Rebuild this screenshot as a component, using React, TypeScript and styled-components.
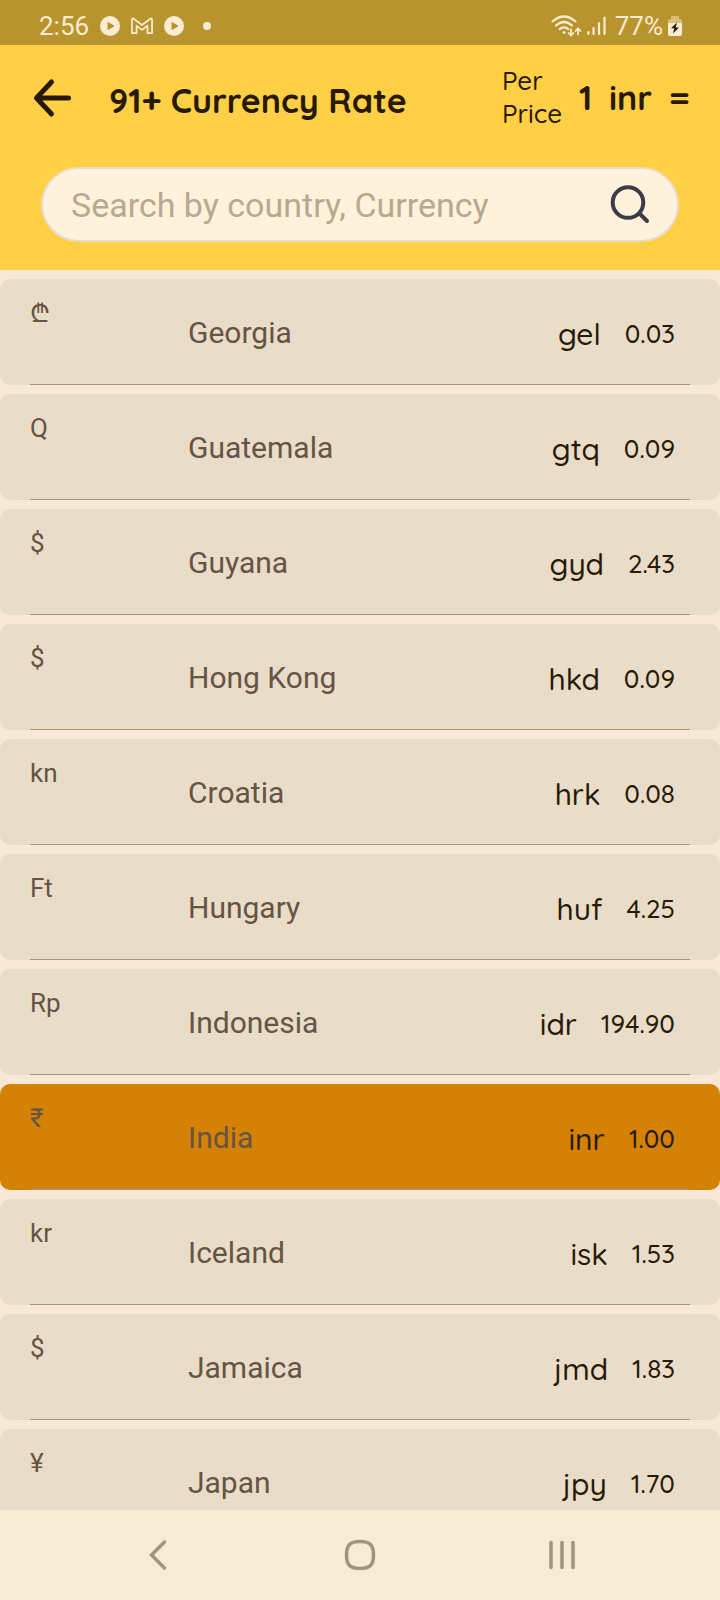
import React from "react";
import styled, { createGlobalStyle } from "styled-components";

const ink = "#281a02";
const muted = "#665444";
const cream = "#fbebd0";
const rounded = `Quicksand, Lato, "Open Sans", sans-serif`;

const GlobalStyle = createGlobalStyle`
  * { box-sizing: border-box; }
  body { margin: 0; font-family: Roboto, "Noto Sans", sans-serif; background: #f8e8d8; }
  button { border: 0; padding: 0; background: none; cursor: pointer; font: inherit; }
  svg { display: block; }
`;

const Screen = styled.div`
  display: flex;
  flex-direction: column;
  height: 100vh;
  overflow: hidden;
`;

const StatusBar = styled.div`
  flex: none;
  display: flex;
  align-items: center;
  justify-content: space-between;
  height: 45px;
  padding: 7px 38px 0 39px;
  background: #b8942e;
  color: ${cream};
  font-size: 26px;
  line-height: 30px;
`;

const StatusGroup = styled.div<{ $gap: number }>`
  display: flex;
  align-items: center;
  gap: ${(p) => p.$gap}px;
`;

const DotSlot = styled.span`
  padding-left: 8px;
`;

const BatteryText = styled.span`
  padding-left: 4px;
`;

const Header = styled.header`
  flex: none;
  padding: 19px 30px 28px;
  background: #ffd046;
  color: ${ink};
  font-family: ${rounded};
`;

const TitleRow = styled.div`
  display: flex;
  align-items: center;
  height: 66px;
`;

const BackButton = styled.button`
  padding-top: 2px;
`;

const Title = styled.h1`
  flex: 1;
  margin: 0;
  padding: 8px 0 0 35px;
  font-size: 34px;
  line-height: 44px;
  font-weight: 700;
  white-space: nowrap;
`;

const PerPrice = styled.span`
  width: 77px;
  font-size: 26px;
  line-height: 33px;
  font-weight: 500;
`;

const BaseRate = styled.span`
  display: flex;
  justify-content: space-between;
  width: 111px;
  padding-top: 2px;
  font-size: 34px;
  line-height: 44px;
  font-weight: 700;
`;

const SearchBox = styled.form`
  display: flex;
  align-items: center;
  height: 75px;
  margin: 37px 11px 0;
  padding: 0 26px 0 28px;
  border: 2px solid #e9dcc8;
  border-radius: 38px;
  background: #fff2dc;
`;

const SearchInput = styled.input`
  flex: 1;
  min-width: 0;
  height: 44px;
  padding: 0;
  border: 0;
  outline: 0;
  background: transparent;
  color: ${ink};
  font-family: Roboto, sans-serif;
  font-size: 34px;
  &::placeholder { color: #b7a98f; opacity: 1; }
`;

const List = styled.ul`
  flex: 1;
  min-height: 0;
  display: flex;
  flex-direction: column;
  gap: 9px;
  margin: 0;
  padding: 9px 0;
  overflow-y: auto;
  scrollbar-width: none;
  list-style: none;
`;

const Row = styled.li<{ $active: boolean }>`
  flex: none;
  padding: 0 30px;
  border-radius: 10px;
  background: ${(p) => (p.$active ? "#d48205" : "#e9dcc8")};
`;

const RowBody = styled.div`
  display: flex;
  align-items: center;
  height: 106px;
  padding-right: 15px;
  border-bottom: 1px solid #a5967a;
  color: ${ink};
  font-family: ${rounded};
  font-weight: 500;
`;

const CurrencySymbol = styled.span`
  align-self: flex-start;
  width: 158px;
  padding-top: 19px;
  color: ${muted};
  font-family: Roboto, "Noto Sans", "DejaVu Sans", sans-serif;
  font-size: 26px;
  line-height: 30px;
  font-weight: 400;
`;

const Country = styled.span`
  flex: 1;
  padding-top: 2px;
  color: ${muted};
  font-family: Roboto, sans-serif;
  font-size: 30px;
  line-height: 36px;
  font-weight: 400;
`;

const Code = styled.span`
  padding: 4px 24px 0 0;
  font-size: 30px;
  line-height: 36px;
`;

const Rate = styled.span`
  padding-top: 4px;
  font-size: 26px;
  line-height: 36px;
`;

const NavBar = styled.nav`
  flex: none;
  display: grid;
  grid-template-columns: repeat(3, 1fr);
  height: 90px;
  padding: 0 57px;
  background: #f7ebd5;
`;

const NavButton = styled.button`
  display: flex;
  align-items: center;
  justify-content: center;
`;

const PlayIcon = () => (
  <svg width="20" height="20" viewBox="0 0 20 20">
    <circle cx="10" cy="10" r="10" fill={cream} />
    <path d="M8 6.6 14 10l-6 3.4z" fill="#b8942e" stroke="#b8942e" strokeLinejoin="round" />
  </svg>
);

const MailIcon = () => (
  <svg width="22" height="18" viewBox="0 0 23 18" fill="none" stroke={cream} strokeWidth="1.8" strokeLinejoin="round">
    <path d="M1 2.2Q1 .9 2.4 1.2L11.5 8 20.6 1.2Q22 .9 22 2.2V16.5H17.2V8.7L11.5 13 5.8 8.7V16.5H1z" />
  </svg>
);

const DotIcon = () => (
  <svg width="8" height="8" viewBox="0 0 8 8">
    <circle cx="4" cy="4" r="4" fill={cream} />
  </svg>
);

const WifiIcon = () => (
  <svg width="31" height="22" viewBox="0 0 31 22" fill="none" stroke={cream} strokeWidth="2.2" strokeLinecap="round" strokeLinejoin="round">
    <path d="M1.5 6.5Q13 -3.5 24.5 6.5M5 10.5Q13 3.5 21 10.5M8.8 14.2Q13 10.6 17.2 14.2" />
    <circle cx="13" cy="17.5" r="1.5" fill={cream} stroke="none" />
    <path d="M20 14.5v6m-2.5-2.5 2.5 2.7 2.5-2.7M27 19.5v-6m-2.5 2.5 2.5-2.7 2.5 2.7" strokeWidth="1.8" />
  </svg>
);

const SignalIcon = () => (
  <svg width="19" height="20" viewBox="0 0 19 20" stroke={cream} strokeWidth="2.2" strokeLinecap="round">
    <path d="M1.5 16v2M6.5 12v6M12 7v11M17.5 1.5V18" />
  </svg>
);

const BatteryIcon = () => (
  <svg width="14" height="20" viewBox="0 0 14 20">
    <path d="M0 7V5q0-2 2-2h1V1q0-1 1-1h6q1 0 1 1v2h1q2 0 2 2v2z" fill="#d9bd78" />
    <path d="M0 7h14v11q0 2-2 2H2q-2 0-2-2z" fill={cream} />
    <path d="M9 6.5 3 12.3h3.3L5 17.5l6-6H7.7z" fill={ink} />
  </svg>
);

const BackArrow = () => (
  <svg width="44" height="44" viewBox="0 0 44 44" fill="none" stroke={ink} strokeWidth="5" strokeLinecap="round" strokeLinejoin="round">
    <path d="M38.5 22H7M21.5 6 6.5 22l15 16" />
  </svg>
);

const SearchIcon = () => (
  <svg width="42" height="42" viewBox="0 0 42 42" fill="none" stroke="#3c3b46" strokeWidth="4" strokeLinecap="round">
    <circle cx="19" cy="18.5" r="15.3" />
    <path d="m30.5 29.5 7.5 7.5" />
  </svg>
);

const rates: [string, string, string, string][] = [
  ["₾", "Georgia", "gel", "0.03"],
  ["Q", "Guatemala", "gtq", "0.09"],
  ["$", "Guyana", "gyd", "2.43"],
  ["$", "Hong Kong", "hkd", "0.09"],
  ["kn", "Croatia", "hrk", "0.08"],
  ["Ft", "Hungary", "huf", "4.25"],
  ["Rp", "Indonesia", "idr", "194.90"],
  ["₹", "India", "inr", "1.00"],
  ["kr", "Iceland", "isk", "1.53"],
  ["$", "Jamaica", "jmd", "1.83"],
  ["¥", "Japan", "jpy", "1.70"],
];

export default function App() {
  return (
    <Screen>
      <GlobalStyle />
      <StatusBar>
        <StatusGroup $gap={11}>
          <span>2:56</span>
          <PlayIcon />
          <MailIcon />
          <PlayIcon />
          <DotSlot><DotIcon /></DotSlot>
        </StatusGroup>
        <StatusGroup $gap={5}>
          <WifiIcon />
          <SignalIcon />
          <BatteryText>77%</BatteryText>
          <BatteryIcon />
        </StatusGroup>
      </StatusBar>
      <Header>
        <TitleRow>
          <BackButton type="button" aria-label="Back"><BackArrow /></BackButton>
          <Title>91+ Currency Rate</Title>
          <PerPrice>Per Price</PerPrice>
          <BaseRate><span>1</span><span>inr</span><span>=</span></BaseRate>
        </TitleRow>
        <SearchBox role="search" onSubmit={(e) => e.preventDefault()}>
          <SearchInput type="text" aria-label="Search by country or currency" placeholder="Search by country, Currency" />
          <button type="submit" aria-label="Search"><SearchIcon /></button>
        </SearchBox>
      </Header>
      <List>
        {rates.map(([symbol, country, code, rate]) => (
          <Row key={code} $active={code === "inr"}>
            <RowBody>
              <CurrencySymbol>{symbol}</CurrencySymbol>
              <Country>{country}</Country>
              <Code>{code}</Code>
              <Rate>{rate}</Rate>
            </RowBody>
          </Row>
        ))}
      </List>
      <NavBar>
        <NavButton type="button" aria-label="Back">
          <svg width="18" height="30" viewBox="0 0 18 30" fill="none" stroke="#a2947b" strokeWidth="3.5" strokeLinecap="round">
            <path d="M15.5 2 2.5 15l13 13" />
          </svg>
        </NavButton>
        <NavButton type="button" aria-label="Home">
          <svg width="32" height="32" viewBox="0 0 32 32" fill="none" stroke="#a2947b" strokeWidth="3.5">
            <path d="M16 2.5c10 0 13.5 3.5 13.5 13.5S26 29.5 16 29.5 2.5 26 2.5 16 6 2.5 16 2.5z" />
          </svg>
        </NavButton>
        <NavButton type="button" aria-label="Recent apps">
          <svg width="28" height="30" viewBox="0 0 28 30" stroke="#a2947b" strokeWidth="3.5" strokeLinecap="round">
            <path d="M3 2.5v25M14 2.5v25M25 2.5v25" />
          </svg>
        </NavButton>
      </NavBar>
    </Screen>
  );
}
